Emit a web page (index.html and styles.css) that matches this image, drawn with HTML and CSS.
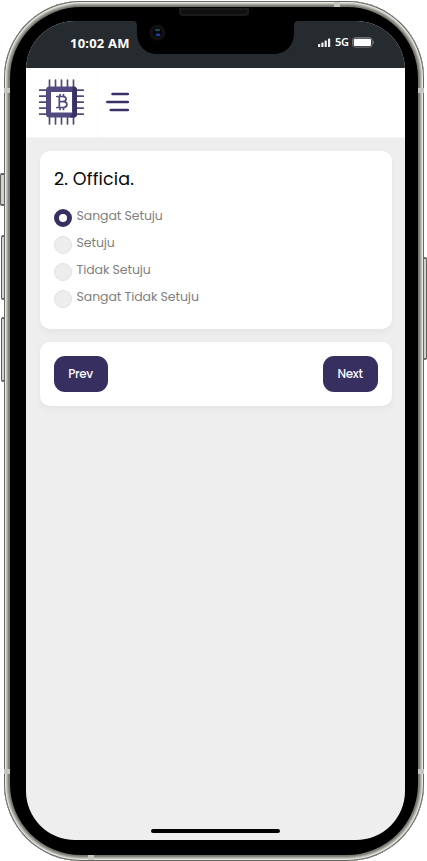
FILE: index.html
```html
<!DOCTYPE html>
<html lang="id">
<head>
<meta charset="utf-8">
<meta name="viewport" content="width=device-width, initial-scale=1">
<title>Survey</title>
<link rel="stylesheet" href="styles.css">
</head>
<body>
<div class="device">
  <i class="key key-mute"></i><i class="key key-up"></i><i class="key key-down"></i><i class="key key-power"></i>
  <div class="phone">
    <i class="band band-top"></i><i class="band band-left-top"></i><i class="band band-right-top"></i>
    <i class="band band-left-bottom"></i><i class="band band-right-bottom"></i><i class="band band-bottom"></i>
    <i class="speaker"></i>
    <div class="screen">
      <div class="status">
        <span class="time">10:02 AM</span>
        <svg class="notch" width="165" height="34" viewBox="0 0 165 34">
          <path d="M0 0h165q-4 0-4 5v7c0 12-8 21-20 21H24C12 33 4 24 4 12V5Q4 0 0 0z"/>
          <circle cx="24.500" cy="11.500" r="8" fill="#101012"/>
          <circle cx="24.500" cy="11.500" r="4.500" fill="#05070d"/>
          <ellipse cx="24.500" cy="9" rx="2.800" ry="1.200" fill="#1b4b50"/>
          <ellipse cx="25" cy="13.800" rx="2.500" ry="1.500" fill="#203b91"/>
        </svg>
        <div class="signals">
          <svg width="13" height="9" viewBox="0 0 13 9" fill="#eee"><rect x="0" y="6" width="2.200" height="3" rx=".6"/><rect x="3.300" y="4.500" width="2.200" height="4.500" rx=".6"/><rect x="6.600" y="2.500" width="2.200" height="6.500" rx=".6"/><rect x="10" y=".5" width="2.200" height="8.500" rx=".6"/></svg>
          <span class="network">5G</span>
          <svg width="23" height="11" viewBox="0 0 23 11"><rect x=".6" y=".6" width="19.600" height="9.500" rx="2.500" fill="none" stroke="#74787b"/><rect x="1.800" y="1.800" width="17.200" height="7.200" rx="1.300" fill="#fff"/><path d="M21 3.500q2 1.800 0 3.600z" fill="#777b7e"/></svg>
        </div>
      </div>
      <header class="header">
        <div class="brand">
          <svg width="46" height="46" viewBox="0 0 46 46">
            <path d="M11.500 1v44M17.500 1v44M23.500 1v44M29.500 1v44M35.500 1v44M1.700 11.200h43.600M1.700 17.200h43.600M1.700 23.200h43.600M1.700 29.200h43.600M1.700 35.200h43.600" stroke="#514977" stroke-width="1.700" stroke-linecap="round"/>
            <rect x="8" y="7.500" width="31" height="31" rx="3.500" fill="#504a80"/>
            <path d="M34.500 7.500h1q3.500 0 3.500 3.500v24q0 3.500-3.500 3.500h-4L34.500 34z" fill="#3b3062"/>
            <rect x="13" y="13" width="21" height="20.500" fill="#fff"/>
            <path d="M18.800 17.500h5.700c4.800 0 4.800 5.200 0 5.200h-3 4c4.500 0 4.500 5.800 0 5.800h-6.700M21.300 17.500v11M22 15.500v2M25.500 15.500v2M22 28.500v2M25.500 28.500v2" fill="none" stroke="#514978" stroke-width="1.700" stroke-linecap="round"/>
          </svg>
        </div>
        <svg class="menu" width="24" height="20" viewBox="0 0 24 20"><path d="M6.500 2h15.300M1.300 10h20.500M4.700 18h17.100" stroke="#3b3063" stroke-width="2.500" stroke-linecap="round"/></svg>
      </header>
      <main class="content">
        <section class="card question">
          <h1>2. Officia.</h1>
          <label class="option"><input type="radio" name="answer" checked><span>Sangat Setuju</span></label>
          <label class="option"><input type="radio" name="answer"><span>Setuju</span></label>
          <label class="option"><input type="radio" name="answer"><span>Tidak Setuju</span></label>
          <label class="option"><input type="radio" name="answer"><span>Sangat Tidak Setuju</span></label>
        </section>
        <nav class="card actions"><button class="prev">Prev</button><button class="next">Next</button></nav>
      </main>
      <i class="home"></i>
    </div>
  </div>
</div>
</body>
</html>
```
FILE: styles.css
```css
* { box-sizing: border-box; }
body { margin: 0; background: #fff; overflow: hidden; font-family: Poppins, Inter, sans-serif; }
.device { position: relative; width: 427px; height: 861px; padding: 1px 3px 0 4px; }
.phone { position: relative; width: 420px; height: 860px; padding: 20px 19px 21px 22px; border-radius: 77px; background: #000; box-shadow: inset 0 0 0 1px #686966, inset 0 0 0 2px #e8e9e5, inset 0 0 0 3px #c2c4bd, inset 0 0 0 4px #a5a69e, inset 0 0 0 5px #84857c, inset 0 0 0 6px #77776f; }
.screen { position: relative; width: 379px; height: 819px; border-radius: 49px; background: #eee; overflow: hidden; display: flex; flex-direction: column; }
.status { height: 47px; flex: none; display: flex; background: #262b2f; color: #fff; }
.time { width: 107px; padding: 13px 0 0 44px; font: 700 13px/18px "Noto Sans", "Open Sans", sans-serif; white-space: nowrap; letter-spacing: .2px; }
.notch { flex: none; }
.signals { display: flex; align-items: center; height: 18px; margin: 12px 0 0 20px; }
.network { font: 600 11px/18px "Noto Sans", sans-serif; margin: 0 3px 0 4px; letter-spacing: -.3px; }
.header { height: 70px; flex: none; display: flex; background: #fff; border-bottom: 1px solid #f5f5f5; }
.brand { width: 72px; padding: 11px 0 0 12px; border-right: 1px solid #fcfcfc; }
.menu { margin: 23.500px 0 0 8px; }
.content { padding: 13px 13px 0 14px; display: flex; flex-direction: column; gap: 13px; }
.card { background: #fff; border-radius: 10px; box-shadow: 0 3px 7px rgba(0,0,0,.045); }
.question { height: 178px; padding: 15px 14px 14px; }
h1 { margin: 0 0 15px; font-size: 17.5px; line-height: 27px; font-weight: 400; color: #080808; letter-spacing: .15px; }
.option { height: 27px; display: flex; align-items: flex-start; gap: 4.500px; color: #808080; font-size: 12.5px; line-height: 16px; font-weight: 400; letter-spacing: -.08px; white-space: nowrap; }
.option input { appearance: none; flex: none; width: 18px; height: 18px; margin: 1px 0 0; border: 1px solid #e2e2e2; border-radius: 50%; background: #ededed; }
.option input:checked { border: 5.5px solid #382f61; background: #fff; }
.actions { height: 64px; padding: 14px; display: flex; justify-content: space-between; }
.actions button { height: 36px; padding: 0 1px 0 0; border: 0; border-radius: 11px; background: #382f61; color: #f8f7fc; font: 500 12px/36px Poppins, Inter, sans-serif; letter-spacing: -.4px; }
.prev { width: 54px; }
.next { width: 55px; }
.home { position: absolute; left: 125px; bottom: 7px; width: 129px; height: 4px; border-radius: 2px; background: #000; }
.speaker { position: absolute; left: 175px; top: 7px; width: 70px; height: 8px; border: 2px solid #1b1b1b; border-radius: 0 0 4px 4px; background: #101010; }
.band { position: absolute; width: 6px; height: 5px; background: #c5c6c0; }
.band-top { left: 330px; top: 1px; height: 5px; }
.band-left-top { left: 0; top: 87px; }
.band-right-top { right: 0; top: 87px; }
.band-left-bottom { left: 0; bottom: 87px; }
.band-right-bottom { right: 0; bottom: 87px; }
.band-bottom { left: 84px; bottom: 1px; }
.key { position: absolute; left: 1px; width: 4px; border: solid #60625e; border-width: 2px 1px; border-radius: 2px; background: #d0d1ca; }
.key-mute { left: 0; top: 173px; height: 33px; width: 5px; }
.key-up { top: 235px; height: 65px; }
.key-down { top: 317px; height: 65px; }
.key-power { left: 423px; top: 257px; height: 103px; }
```
